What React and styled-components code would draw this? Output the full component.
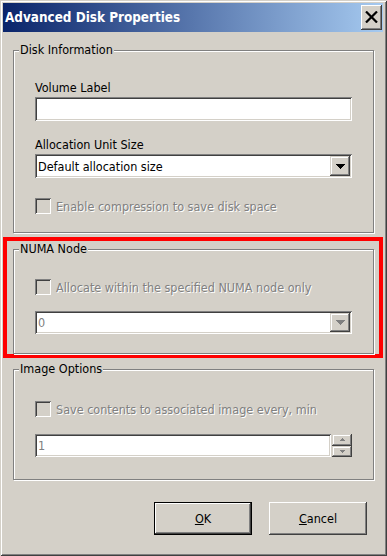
import React from 'react';
import styled, { createGlobalStyle } from 'styled-components';

const GlobalStyle = createGlobalStyle`
  html, body { margin: 0; padding: 0; background: #d4d0c8; }
  body {
    font-family: "DejaVu Sans Condensed", "DejaVu Sans", sans-serif;
    font-size: 12.5px;
    color: #000;
  }
  * { box-sizing: border-box; }
`;

const Window = styled.div`
  width: 387px;
  height: 556px;
  padding: 3px 4px 3px 3px;
  background: #d4d0c8;
  box-shadow: inset 1px 1px #d4d0c8, inset -1px -1px #404040, inset 2px 2px #fff,
    inset -2px -2px #808080;
  display: flex;
  flex-direction: column;
`;

const TitleBar = styled.div`
  height: 29px;
  flex: none;
  display: flex;
  align-items: center;
  justify-content: space-between;
  padding: 0 1px 0 2px;
  background: linear-gradient(to right, #0a246a, #a6caf0);
`;

const Title = styled.span`
  color: #fff;
  font-family: "DejaVu Sans Condensed", "DejaVu Sans", sans-serif;
  font-weight: bold;
  font-size: 13.4px;
  line-height: 16px;
`;

const CloseButton = styled.span`
  width: 21px;
  height: 25px;
  background: #d4d0c8;
  box-shadow: inset -1px -1px #404040, inset 1px 1px #fff, inset -2px -2px #808080;
  display: flex;
  align-items: center;
  justify-content: center;
  padding: 0 1px 1px 0;
`;

const Content = styled.div`
  display: flex;
  flex-direction: column;
  padding-top: 11px;
`;

const Group = styled.fieldset`
  margin: ${(p) => p.$margin};
  padding: 0 5px;
  border: 1px solid #808080;
  box-shadow: inset 1px 1px #fff, 1px 1px #fff;
  min-inline-size: auto;
`;

const Legend = styled.legend`
  padding: 0 1px;
  line-height: 14px;
  background: #d4d0c8;
`;

const GroupBody = styled.div`
  display: flex;
  flex-direction: column;
  padding: ${(p) => p.$top}px 16px ${(p) => p.$bottom}px;
`;

const Highlight = styled.div`
  margin-top: 4px;
  border: 4px solid #ff0000;
  padding-top: 1px;
`;

const FieldLabel = styled.div`
  line-height: 15px;
  margin-top: ${(p) => p.$mt || 0}px;
  margin-bottom: 2px;
`;

const sunken = `
  background: #fff;
  box-shadow: inset 1px 1px #808080, inset -1px -1px #fff, inset 2px 2px #404040,
    inset -2px -2px #d4d0c8;
`;

const raised = `
  background: #d4d0c8;
  box-shadow: inset -1px -1px #404040, inset 1px 1px #d4d0c8, inset -2px -2px #808080,
    inset 2px 2px #fff;
`;

const TextBox = styled.div`
  ${sunken}
  height: ${(p) => p.$h}px;
  flex: 1 1 auto;
  padding: 2px 3px;
  display: flex;
  align-items: center;
  color: ${(p) => (p.$disabled ? '#808080' : '#000')};
`;

const Combo = styled.div`
  ${sunken}
  height: ${(p) => p.$h}px;
  flex: none;
  margin-top: ${(p) => p.$mt || 0}px;
  padding: 2px;
  display: flex;
`;

const ComboValue = styled.span`
  flex: 1;
  padding-left: 1px;
  display: flex;
  align-items: center;
  color: ${(p) => (p.$disabled ? '#808080' : '#000')};
`;

const DropButton = styled.span`
  ${raised}
  width: 20px;
  display: flex;
  align-items: center;
  justify-content: center;
`;

const CheckRow = styled.div`
  display: flex;
  align-items: center;
  gap: 5px;
  height: 16px;
  flex: none;
  margin-top: ${(p) => p.$mt || 0}px;
  color: #808080;
  text-shadow: 1px 1px #fff;
  white-space: nowrap;
`;

const CheckBox = styled.span`
  flex: none;
  width: 16px;
  height: 16px;
  background: #d4d0c8;
  box-shadow: inset 1px 1px #808080, inset -1px -1px #fff, inset 2px 2px #404040,
    inset -2px -2px #d4d0c8;
`;

const SpinRow = styled.div`
  display: flex;
  gap: 1px;
  height: 23px;
  flex: none;
  margin-top: ${(p) => p.$mt}px;
`;

const SpinButtons = styled.div`
  width: 20px;
  display: flex;
  flex-direction: column;
`;

const SpinButton = styled.span`
  ${raised}
  flex: 1;
  display: flex;
  align-items: center;
  justify-content: center;
`;

const ButtonRow = styled.div`
  display: flex;
  justify-content: flex-end;
  gap: 17px;
  margin-top: 22px;
  padding-right: 16px;
`;

const DialogButton = styled.span`
  width: 98px;
  height: 33px;
  display: flex;
  align-items: center;
  justify-content: center;
  background: #d4d0c8;
  color: #000;
  box-shadow: ${(p) =>
    p.$default
      ? 'inset 0 0 0 1px #000, inset -2px -2px #404040, inset 2px 2px #fff, inset -3px -3px #808080'
      : 'inset -1px -1px #404040, inset 1px 1px #fff, inset -2px -2px #808080'};
  padding-bottom: 1px;
`;

const Arrow = ({ dir = 'down', color = '#000', w = 9, h = 5 }) => (
  <svg width={w} height={h} viewBox={`0 0 ${w} ${h}`} shapeRendering="crispEdges">
    <polygon
      points={dir === 'down' ? `0,0 ${w},0 ${w / 2},${h}` : `0,${h} ${w},${h} ${w / 2},0`}
      fill={color}
    />
  </svg>
);

export default function App() {
  return (
    <>
      <GlobalStyle />
      <Window>
        <TitleBar>
          <Title>Advanced Disk Properties</Title>
          <CloseButton>
            <svg width="13" height="12" viewBox="0 0 13 12">
              <path d="M1 0.5 L12 11.5 M12 0.5 L1 11.5" stroke="#000" strokeWidth="2.2" />
            </svg>
          </CloseButton>
        </TitleBar>
        <Content>
          <Group $margin="0 9px 0 10px">
            <Legend>Disk Information</Legend>
            <GroupBody $top={23} $bottom={18}>
              <FieldLabel>Volume Label</FieldLabel>
              <TextBox $h={24} />
              <FieldLabel $mt={16}>Allocation Unit Size</FieldLabel>
              <Combo $h={24}>
                <ComboValue>Default allocation size</ComboValue>
                <DropButton>
                  <Arrow />
                </DropButton>
              </Combo>
              <CheckRow $mt={20}>
                <CheckBox />
                Enable compression to save disk space
              </CheckRow>
            </GroupBody>
          </Group>
          <Highlight>
            <Group $margin="0 5px 0 6px">
              <Legend>NUMA Node</Legend>
              <GroupBody $top={23} $bottom={19}>
                <CheckRow>
                  <CheckBox />
                  Allocate within the specified NUMA node only
                </CheckRow>
                <Combo $h={23} $mt={16}>
                  <ComboValue $disabled>0</ComboValue>
                  <DropButton>
                    <Arrow color="#808080" />
                  </DropButton>
                </Combo>
              </GroupBody>
            </Group>
          </Highlight>
          <Group $margin="4px 9px 0 10px">
            <Legend>Image Options</Legend>
            <GroupBody $top={25} $bottom={22}>
              <CheckRow>
                <CheckBox />
                Save contents to associated image every, min
              </CheckRow>
              <SpinRow $mt={17}>
                <TextBox $h={23} $disabled>1</TextBox>
                <SpinButtons>
                  <SpinButton>
                    <Arrow dir="up" color="#808080" w={5} h={3} />
                  </SpinButton>
                  <SpinButton>
                    <Arrow color="#808080" w={5} h={3} />
                  </SpinButton>
                </SpinButtons>
              </SpinRow>
            </GroupBody>
          </Group>
          <ButtonRow>
            <DialogButton $default>
              <span>
                <u>O</u>K
              </span>
            </DialogButton>
            <DialogButton>
              <span>
                <u>C</u>ancel
              </span>
            </DialogButton>
          </ButtonRow>
        </Content>
      </Window>
    </>
  );
}
